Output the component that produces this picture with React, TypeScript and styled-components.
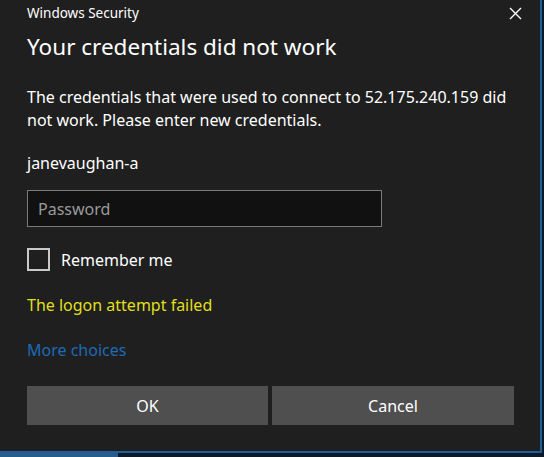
import React from 'react';
import styled, { createGlobalStyle } from "styled-components";

const GlobalStyle = createGlobalStyle`
  html, body {
    margin: 0;
    padding: 0;
    background-color: #0b1a29;
  }
  body {
    font-family: "Noto Sans", "Open Sans", sans-serif;
    overflow: hidden;
  }
`

const CloseIcon = () => (
    <svg width="13" height="13" viewBox="0 0 13 13">
        <path d="M1 1 L12 12 M12 1 L1 12" stroke="#ffffff" strokeWidth="1.4" fill="none"/>
    </svg>
)

export default function App() {
    return (
        <>
            <GlobalStyle/>
            <Window>
                <Header>
                    <Caption>Windows Security</Caption>
                    <CloseButton><CloseIcon/></CloseButton>
                </Header>
                <Title>Your credentials did not work</Title>
                <Text>
                    The credentials that were used to connect to 52.175.240.159 did not work. Please enter new
                    credentials.
                </Text>
                <User>janevaughan-a</User>
                <PasswordInput placeholder="Password" type="password"/>
                <CheckRow>
                    <CheckBox/>
                    <CheckLabel>Remember me</CheckLabel>
                </CheckRow>
                <Message color="#e0df1e" $top={23}>The logon attempt failed</Message>
                <Message color="#1d6ab6" $top={22}>More choices</Message>
                <Buttons>
                    <Button>OK</Button>
                    <Button>Cancel</Button>
                </Buttons>
            </Window>
            <Stripe/>
        </>
    );
}

const Window = styled.div`
  box-sizing: border-box;
  width: 542px;
  height: 453px;
  padding: 0 0 0 27px;
  background-color: #1f1f1f;
  border-right: 2px solid #1f5e98;
  border-bottom: 2px solid #1f5e98;
  display: flex;
  flex-direction: column;
  color: #ffffff;
`

const Header = styled.div`
  display: flex;
  align-items: center;
  justify-content: space-between;
  height: 26px;
  padding-right: 18px;
`

const Caption = styled.span`
  font-size: 13.5px;
  color: #ffffff;
`

const CloseButton = styled.div`
  display: flex;
  align-items: center;
`

const Title = styled.h1`
  margin: 6px 0 0;
  font-size: 22.5px;
  font-weight: 400;
  line-height: 30px;
`

const Text = styled.p`
  margin: 24px 0 0;
  max-width: 490px;
  font-size: 16px;
  line-height: 23.4px;
`

const User = styled.div`
  margin-top: 19.5px;
  font-size: 16px;
  line-height: 23px;
`

const PasswordInput = styled.input`
  margin-top: 15px;
  width: 355px;
  height: 37px;
  box-sizing: border-box;
  background-color: #111111;
  border: 1px solid #7b7b7b;
  padding: 0 10px;
  font-family: "Noto Sans", sans-serif;
  font-size: 16px;
  color: #ffffff;
  outline: none;

  &::placeholder {
    color: #9a9a9a;
  }
`

const CheckRow = styled.div`
  display: flex;
  align-items: center;
  gap: 11px;
  height: 23px;
  margin-top: 21px;
`

const CheckBox = styled.div`
  width: 23px;
  height: 23px;
  box-sizing: border-box;
  border: 2px solid #c9c9c9;
  background-color: #1f1f1f;
`

const CheckLabel = styled.span`
  font-size: 16px;
`

const Message = styled.div<{ color: string; $top: number }>`
  margin-top: ${props => props.$top}px;
  font-size: 16px;
  line-height: 23px;
  color: ${props => props.color};
`

const Buttons = styled.div`
  display: grid;
  grid-template-columns: 241px 242px;
  gap: 4px;
  margin-top: 24px;
`

const Button = styled.button`
  height: 39px;
  border: none;
  background-color: #4f4f4f;
  color: #ffffff;
  font-family: "Noto Sans", sans-serif;
  font-size: 16px;
`

const Stripe = styled.div`
  width: 118px;
  height: 4px;
  background-color: #275b8d;
`
